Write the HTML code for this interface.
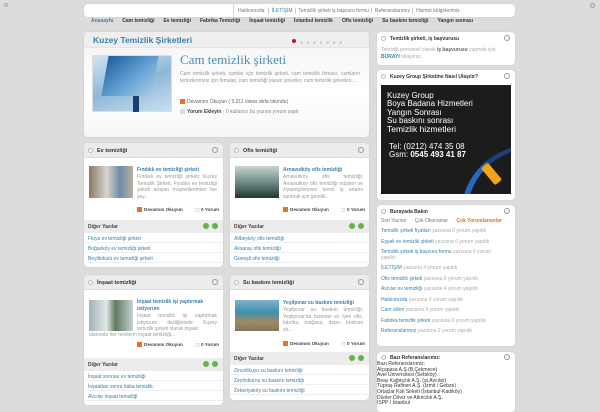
<!DOCTYPE html>
<html><head><meta charset="utf-8"><style>
*{margin:0;padding:0;box-sizing:border-box}
body{width:600px;height:400px;overflow:hidden;background:#dcdcdc;font-family:"Liberation Sans",sans-serif;position:relative;color:#555}
.a{position:absolute}
.box{position:absolute;background:#fff;border-radius:4px;box-shadow:0 0 1px #bbb}
.t{font-size:5px;line-height:6px;white-space:nowrap}
.hd{position:absolute;left:0;right:0;top:0;height:15px;background:#ececec;border-radius:4px 4px 0 0;border-bottom:1px solid #ddd}
.hd b{position:absolute;left:13px;top:5px;font-size:5.5px;color:#333}
.mn{position:absolute;left:4px;top:5px;width:5px;height:5px;border-radius:50%;background:#fff;border:1px solid #bbb}
.gr{position:absolute;right:5px;top:4px;width:6px;height:6px;border-radius:50%;border:1.5px solid #999}
.lk{color:#3a7fa8}
.row{position:absolute;left:0;right:0;height:10px;border-bottom:1px solid #eee;background:#fff;font-size:5px;color:#3a7fa8;padding:3px 0 0 4px;white-space:nowrap}
.dy{position:absolute;left:0;right:0;height:13px;background:#ececec;font-size:5px;color:#444;padding:4px 0 0 4px;font-weight:bold}
.pl{position:absolute;top:3px;width:6px;height:6px;border-radius:50%;background:#6ab04c}
.or{display:inline-block;width:5px;height:5px;background:#e8702a;vertical-align:middle;margin-right:2px}
.nav span{margin-right:9px}
.dv{position:absolute;left:53px;font-size:4.6px;line-height:6px;font-weight:bold;color:#444;white-space:nowrap}
.yr{position:absolute;right:4px;font-size:4.6px;line-height:6px;font-weight:bold;color:#444;white-space:nowrap}
</style></head><body>
<div class="a" style="left:4px;top:3px;width:4px;height:4px;border:1px solid #aaa;border-radius:50%"></div>
<div class="a" style="left:590px;top:3px;width:5px;height:5px;border:1px solid #999;border-radius:50%"></div>
<div class="box" style="left:84px;top:4px;width:431px;height:13px;border-radius:4px">
 <div class="a t" style="left:149px;top:0;height:13px;right:6px;border-left:1px solid #ddd;padding:4px 0 0 4px;color:#777">
 <span>Hakkımızda</span> <span style="color:#3a7fa8">&nbsp;│ İLETİŞİM │</span> <span>Temizlik şirketi iş başvuru formu │</span> <span>Referanslarımız │</span> <span>Hizmet bölgelerimiz</span></div>
</div>
<div class="a t nav" style="left:91px;top:18px;font-size:5px;font-weight:bold;color:#333"><span style="color:#3a7fa8">Anasayfa</span><span>Cam temizliği</span><span>Ev temizliği</span><span>Fabrika Temizliği</span><span>İnşaat temizliği</span><span>İstanbul temizlik</span><span>Ofis temizliği</span><span>Su baskını temizliği</span><span>Yangın sonrası</span></div>
<div class="box" style="left:84px;top:32px;width:285px;height:105px;background:linear-gradient(#f3f3f3,#fff 60%,#f6f6f6)">
 <div class="a" style="left:0;right:0;top:0;height:16px;border-bottom:1px solid #e4e4e4;background:#eee;border-radius:4px 4px 0 0"></div>
 <div class="a" style="left:9px;top:3px;font-size:8.5px;font-weight:bold;color:#3a7fa8">Kuzey Temizlik Şirketleri</div>
 <div class="a" style="left:208px;top:7px;width:4px;height:4px;border-radius:50%;background:#c8102e"></div>
 <div class="a" style="left:216px;top:8px;font-size:5px;color:#bbb;letter-spacing:3.5px">●●●●●●●</div>
 <div class="a" style="left:8px;top:23px;width:80px;height:57px;border:1px solid #ddd;background:linear-gradient(160deg,#cfe4f2,#8fb8d8 50%,#c9dfee)">
  <div class="a" style="left:12px;top:0;width:50px;height:40px;background:linear-gradient(135deg,#1e5fa0,#6aa6d6 60%,#aac9e4);transform:skewX(-10deg)"></div>
  <div class="a" style="left:40px;top:40px;width:6px;height:16px;background:#1b3e70"></div>
 </div>
 <div class="a" style="left:96px;top:20px;font-family:'Liberation Serif',serif;font-size:13px;color:#4a8db5">Cam temizlik şirketi</div>
 <div class="a" style="left:96px;top:39px;width:180px;font-size:5px;line-height:6.5px;color:#999;text-align:justify">Cam temizlik şirketi, camlar için temizlik şirketi, cam temizlik firması, camların temizlenmesi için firmalar, cam temizliği yapan şirketler, cam temizlik şirketleri...</div>
 <div class="a t" style="left:96px;top:67px;color:#666"><span class="or"></span>Devamını Okuyun ( 5.211 views defa okundu)</div>
 <div class="a t" style="left:96px;top:77px;color:#888"><span class="or" style="background:#cfe1f0"></span><b style="color:#444">Yorum Ekleyin</b> - 0 kullanıcı bu yazıya yorum yaptı</div>
</div>

<div class="box" style="left:84px;top:143px;width:139px;height:124px">
 <div class="hd"><span class="mn"></span><b>Ev temizliği</b><span class="gr"></span></div>
 <div class="a" style="left:5px;top:23px;width:44px;height:32px;background:linear-gradient(90deg,#8a7a66,#d8d4cc 40%,#6f8ca6 70%,#b8b0a4)"></div>
 <div class="a t lk" style="left:53px;top:24px;font-weight:bold">Fındıklı ev temizliği şirketi</div>
 <div class="a" style="left:53px;top:31px;width:80px;font-size:5px;line-height:6.5px;color:#999;text-align:justify">Fındıklı ev temizliği şirketi; Kuzey Temizlik Şirketi, Fındıklı ev temizliği şirketi arayan müşterilerimize her şey...</div>
 <div class="dv" style="top:64px"><span class="or"></span>Devamını Okuyun</div><div class="yr" style="top:64px"><span style="color:#bbb">▢</span> 0 Yorum</div>
 <div class="dy" style="top:77px">Diğer Yazılar<span class="pl" style="right:14px"></span><span class="pl" style="right:5px"></span></div>
 <div class="row" style="top:90px">Fluya ev temizliği şirketi</div>
 <div class="row" style="top:100px">Boğazköy ev temizliği şirketi</div>
 <div class="row" style="top:110px">Beylikdüzü ev temizliği şirketi</div>
</div>
<div class="box" style="left:230px;top:143px;width:139px;height:124px">
 <div class="hd"><span class="mn"></span><b>Ofis temizliği</b><span class="gr"></span></div>
 <div class="a" style="left:5px;top:23px;width:44px;height:32px;background:linear-gradient(180deg,#c9d4cf,#6f8d8a 50%,#253430)"></div>
 <div class="a t lk" style="left:53px;top:24px;font-weight:bold">Arnavutköy ofis temizliği</div>
 <div class="a" style="left:53px;top:31px;width:80px;font-size:5px;line-height:6.5px;color:#999;text-align:justify">Arnavutköy ofis temizliği; Arnavutköy ofis temizliği müşteri ve ziyaretçilerinize temiz iş ortamı sunmak için gerekli...</div>
 <div class="dv" style="top:64px"><span class="or"></span>Devamını Okuyun</div><div class="yr" style="top:64px"><span style="color:#bbb">▢</span> 0 Yorum</div>
 <div class="dy" style="top:77px">Diğer Yazılar<span class="pl" style="right:14px"></span><span class="pl" style="right:5px"></span></div>
 <div class="row" style="top:90px">Altbeyköy ofis temizliği</div>
 <div class="row" style="top:100px">Aksaray ofis temizliği</div>
 <div class="row" style="top:110px">Güneşli ofis temizliği</div>
</div>
<div class="box" style="left:84px;top:275px;width:139px;height:130px">
 <div class="hd"><span class="mn"></span><b>İnşaat temizliği</b><span class="gr"></span></div>
 <div class="a" style="left:5px;top:25px;width:44px;height:31px;background:linear-gradient(90deg,#9fb4bf,#e2e6e4 40%,#5f7a60 60%,#c7d0d4)"></div>
 <div class="a" style="left:53px;top:24px;width:80px;font-size:5px;line-height:6.5px;font-weight:bold;color:#3a7fa8">İnşaat temizlik işi yaptırmak istiyorum</div>
 <div class="a" style="left:53px;top:38px;width:80px;font-size:5px;line-height:6.5px;color:#999;text-align:justify">İnşaat temizlik işi yaptırmak istiyorum dediğinizde Kuzey temizlik şirketi olarak inşaat</div>
 <div class="a t" style="left:5px;top:57px;color:#999">alanında her nevilerin inşaat temizliği...</div>
 <div class="dv" style="top:67px"><span class="or"></span>Devamını Okuyun</div><div class="yr" style="top:67px"><span style="color:#bbb">▢</span> 0 Yorum</div>
 <div class="dy" style="top:83px">Diğer Yazılar<span class="pl" style="right:14px"></span><span class="pl" style="right:5px"></span></div>
 <div class="row" style="top:96px">İnşaat sonrası ev temizliği</div>
 <div class="row" style="top:106px">İnşaattan sonra kaba temizlik</div>
 <div class="row" style="top:116px">Avcılar inşaat temizliği</div>
</div>
<div class="box" style="left:230px;top:275px;width:139px;height:125px">
 <div class="hd"><span class="mn"></span><b>Su baskını temizliği</b><span class="gr"></span></div>
 <div class="a" style="left:5px;top:25px;width:44px;height:31px;background:linear-gradient(180deg,#7fb3c9,#3f8fb0 40%,#a08a63 70%,#7d7a5a)"></div>
 <div class="a t lk" style="left:53px;top:25px;font-weight:bold">Yeşilpınar su baskını temizliği</div>
 <div class="a" style="left:53px;top:32px;width:80px;font-size:5px;line-height:6.5px;color:#999;text-align:justify">Yeşilpınar su baskını temizliği; Yeşilpınar'da bulunan ev iyeri ofis, fabrika, mağaza, depo, bodrum vb...</div>
 <div class="dv" style="top:66px"><span class="or"></span>Devamını Okuyun</div><div class="yr" style="top:66px"><span style="color:#bbb">▢</span> 0 Yorum</div>
 <div class="dy" style="top:77px">Diğer Yazılar<span class="pl" style="right:14px"></span><span class="pl" style="right:5px"></span></div>
 <div class="row" style="top:90px">Zincirlikuyu su baskını temizliği</div>
 <div class="row" style="top:100px">Zeytinburnu su baskını temizliği</div>
 <div class="row" style="top:110px">Zekeriyaköy su baskını temizliği</div>
</div>

<div class="box" style="left:377px;top:32px;width:138px;height:33px">
 <span class="mn" style="top:4px"></span><b class="a" style="left:13px;top:4px;font-size:5px;color:#333">Temizlik şirketi, iş başvurusu</b><span class="gr" style="top:3px"></span>
 <div class="a" style="left:4px;top:15px;font-size:5px;line-height:6.5px;color:#aaa">Temizlik personeli olarak <b style="color:#666">iş başvurusu</b> yapmak için<br><b style="color:#3a7fa8">BURAYI</b> tıklayınız.</div>
</div>
<div class="box" style="left:377px;top:70px;width:138px;height:130px">
 <span class="mn" style="top:4px"></span><b class="a" style="left:13px;top:4px;font-size:5px;color:#333">Kuzey Group Şirketine Nasıl Ulaşılır?</b><span class="gr" style="top:3px"></span>
 <div class="a" style="left:4px;top:15px;width:130px;height:109px;background:#1c1c1c;overflow:hidden;color:#fff;font-size:8px;line-height:8.3px">
  <div class="a" style="left:80px;top:60px;width:140px;height:140px;border-radius:50%;border-left:6px solid #2a66c0;border-top:4px solid #1b3f80"></div>
  <div class="a" style="left:6px;top:7px">Kuzey Group<br>Boya Badana Hizmetleri<br>Yangın Sonrası<br>Su baskını sonrası<br><span style="font-size:8.5px">Temizlik hizmetleri</span></div>
  <div class="a" style="left:8px;top:58px">Tel: (0212) 474 35 08<br>Gsm: <b>0545 493 41 87</b></div>
  <div class="a" style="left:106px;top:78px;width:9px;height:22px;background:#f2a51c;transform:rotate(-40deg);border-radius:2px"></div>
 </div>
</div>
<div class="box" style="left:377px;top:205px;width:138px;height:141px">
 <span class="mn" style="top:4px"></span><b class="a" style="left:13px;top:4px;font-size:5px;color:#333">Burayada Bakın</b><span class="gr" style="top:3px"></span>
 <div class="a t" style="left:4px;top:13px;color:#777">Son Yazılar &nbsp;&nbsp;&nbsp;&nbsp; Çok Okunanlar &nbsp;&nbsp;&nbsp;&nbsp; <b style="color:#e8702a">Çok Yorumlananlar</b></div>
 <div class="a" style="left:4px;top:21px;width:130px;font-size:5px;line-height:10.5px;color:#aaa">
  <div><span class="lk">Temizlik şirketi fiyatları</span> yazısına 0 yorum yapıldı</div>
  <div><span class="lk">Eşyalı ev temizlik şirketi</span> yazısına 0 yorum yapıldı</div>
  <div style="line-height:6px;padding:2px 0"><span class="lk">Temizlik şirketi iş başvuru formu</span> yazısına 6 yorum<br>yapıldı</div>
  <div><span class="lk">İLETİŞİM</span> yazısına 4 yorum yapıldı</div>
  <div><span class="lk">Ofis temizlik şirketi</span> yazısına 0 yorum yapıldı</div>
  <div><span class="lk">Avcılar ev temizliği</span> yazısına 4 yorum yapıldı</div>
  <div><span class="lk">Hakkımızda</span> yazısına 0 yorum yapıldı</div>
  <div><span class="lk">Cam silimi</span> yazısına 0 yorum yapıldı</div>
  <div><span class="lk">Fabrika temizlik şirketi</span> yazısına 0 yorum yapıldı</div>
  <div><span class="lk">Referanslarımız</span> yazısına 2 yorum yapıldı</div>
 </div>
</div>
<div class="box" style="left:377px;top:352px;width:138px;height:60px">
 <span class="mn" style="top:3px"></span><b class="a" style="left:13px;top:3px;font-size:5px;color:#333">Bazı Referanslarımız:</b><span class="gr" style="top:2px"></span>
</div>
<div class="a" style="left:377px;top:362px;font-size:5px;line-height:5.6px;color:#333;white-space:nowrap">Bazı Referanslarımız:<br>Alçapasa A.Ş.(B.Çekmece)<br>Avel Üniversitesi (Sefaköy)<br>Beay Kağıtçılık A.Ş. (st.Avcılar)<br>Tüpraş Rafineri A.Ş. (İzmit / Gebze)<br>Ortaçlar Koll Sirketi (İstanbul-Kadıköy)<br>Dünler Döviz ve Altıncılık A.Ş.<br>ISPP / İstanbul</div>
</body></html>
